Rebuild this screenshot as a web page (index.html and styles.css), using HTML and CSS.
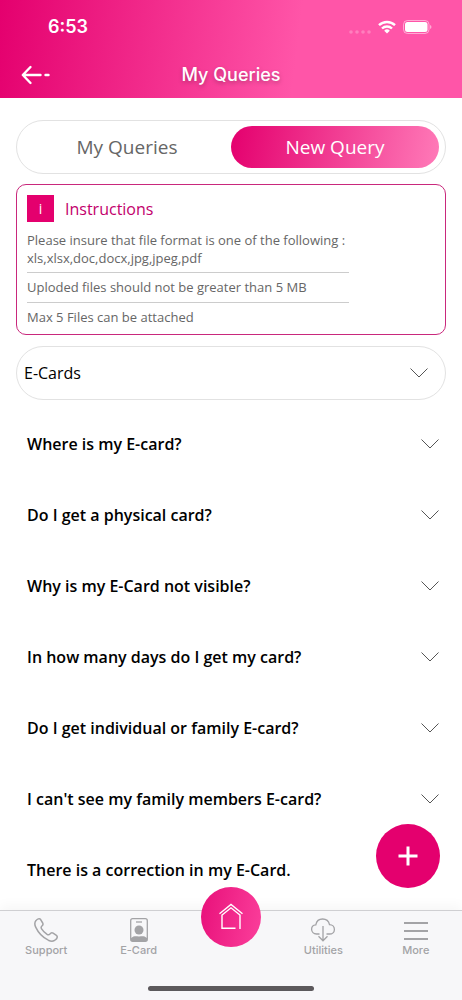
FILE: index.html
```html
<!DOCTYPE html>
<html lang="en">
<head>
<meta charset="utf-8">
<meta name="viewport" content="width=device-width, initial-scale=1">
<title>My Queries</title>
<link rel="stylesheet" href="styles.css">
</head>
<body>
<div class="app">
  <header class="header">
    <div class="status">
      <span class="time">6:53</span>
      <div class="status-icons">
        <svg width="22" height="4" viewBox="0 0 22 4" fill="#fff" fill-opacity=".25"><circle cx="2" cy="2" r="1.800"/><circle cx="8" cy="2" r="1.800"/><circle cx="14" cy="2" r="1.800"/><circle cx="20" cy="2" r="1.800"/></svg>
        <svg width="18" height="14" viewBox="0 0 18 14" fill="none" stroke="#fff" stroke-width="2.4"><path d="M1 5.2a11.5 11.5 0 0 1 16 0"/><path d="M4 8.5a7.2 7.2 0 0 1 10 0"/><path d="M9 13.4 6.2 10.7a4 4 0 0 1 5.6 0z" fill="#fff" stroke="none"/></svg>
        <svg width="29" height="14" viewBox="0 0 29 14"><rect x=".5" y=".5" width="25.500" height="13" rx="4" fill="none" stroke="#fff" stroke-opacity=".5"/><rect x="2" y="2" width="22.500" height="10" rx="2.5" fill="#fff"/><path d="M27 5v4q1.500-.5 1.500-2T27 5z" fill="#fff" fill-opacity=".5"/></svg>
      </div>
    </div>
    <div class="navbar">
      <button class="back" type="button" aria-label="Back">
        <svg width="30" height="20" viewBox="0 0 30 20" fill="none" stroke="#fff" stroke-width="2.400" stroke-linecap="round" stroke-linejoin="round"><path d="M10.500 2 2.800 10l7.700 8M3 10h17.500M25.500 10h3"/></svg>
      </button>
      <h1 class="title">My Queries</h1>
    </div>
  </header>

  <main class="content">
    <div class="tabs">
      <button class="tab" type="button">My Queries</button>
      <button class="tab tab-active" type="button">New Query</button>
    </div>

    <section class="instructions">
      <div class="instructions-head">
        <span class="info">i</span>
        <h2 class="instructions-title">Instructions</h2>
      </div>
      <ul class="rules">
        <li>Please insure that file format is one of the following : xls,xlsx,doc,docx,jpg,jpeg,pdf</li>
        <li>Uploded files should not be greater than 5 MB</li>
        <li>Max 5 Files can be attached</li>
      </ul>
    </section>

    <div class="category">
      <select class="category-select" aria-label="Category"><option>E-Cards</option></select>
      <svg class="chevron category-chevron" viewBox="0 0 18 10"><path d="M.5.5 9 9 17.500.5"/></svg>
    </div>

    <div class="faq">
      <button class="question" type="button">Where is my E-card?<svg class="chevron" viewBox="0 0 18 10"><path d="M.5.5 9 9 17.500.5"/></svg></button>
      <button class="question" type="button">Do I get a physical card?<svg class="chevron" viewBox="0 0 18 10"><path d="M.5.5 9 9 17.500.5"/></svg></button>
      <button class="question" type="button">Why is my E-Card not visible?<svg class="chevron" viewBox="0 0 18 10"><path d="M.5.5 9 9 17.500.5"/></svg></button>
      <button class="question" type="button">In how many days do I get my card?<svg class="chevron" viewBox="0 0 18 10"><path d="M.5.5 9 9 17.500.5"/></svg></button>
      <button class="question" type="button">Do I get individual or family E-card?<svg class="chevron" viewBox="0 0 18 10"><path d="M.5.5 9 9 17.500.5"/></svg></button>
      <button class="question" type="button">I can't see my family members E-card?<svg class="chevron" viewBox="0 0 18 10"><path d="M.5.5 9 9 17.500.5"/></svg></button>
      <button class="question" type="button">There is a correction in my E-Card.</button>
    </div>
  </main>

  <footer class="bottom">
    <button class="add" type="button" aria-label="Add query">
      <svg width="20" height="20" viewBox="0 0 20 20" fill="none" stroke="#fff" stroke-width="3"><path d="M10 .5v19M.5 10h19"/></svg>
    </button>
    <nav class="tabbar">
      <a class="item" href="#support">
        <svg width="26" height="26" viewBox="0 0 26 26" fill="none" stroke="currentColor" stroke-width="1.500" stroke-linejoin="round"><path d="M3 3.600C4.300 2 6.300 1 7.500 2.300L9.700 6c.7 1.300.2 2.200-.8 3-1.100.9-1 1.700-.3 2.800 1.300 2.100 3.300 4.100 5.500 5.600 1.100.7 1.900.7 2.800-.4.900-1.200 2-1.600 3.200-.9l3.300 2.200c1.600 1.100.7 3.100-.9 4.500-1.900 1.700-4.400 1.700-7.200.4C9.400 20.300 5.300 15.700 2.800 10.400 1.500 7.700 1.500 5.300 3 3.600z"/></svg>
        <span>Support</span>
      </a>
      <a class="item" href="#ecard">
        <svg width="26" height="26" viewBox="0 0 26 26" fill="none" stroke="currentColor" stroke-width="1.300"><rect x="4.700" y="1.700" width="16.600" height="22.600" rx="2"/><path d="M10 5h6"/><circle cx="13" cy="13" r="4.500" fill="currentColor" stroke="none"/><path d="M5 21c3-2.500 5-1.800 8-1.500 3-.3 5-1 8 1.500v3H5z" fill="currentColor" stroke="none"/></svg>
        <span>E-Card</span>
      </a>
      <a class="home" href="#home" aria-label="Home">
        <svg width="26" height="28" viewBox="0 0 26 28" fill="none" stroke="#fff" stroke-width="1.400"><path d="M1.500 10.800 13 1.500l11.500 9.300M3.500 12.500 13 4.800l9.500 7.700M22 12v14M4 12v13.300h13.500"/></svg>
      </a>
      <a class="item" href="#utilities">
        <svg width="26" height="26" viewBox="0 0 26 26" fill="none" stroke="currentColor" stroke-width="1.300"><path d="M9.500 17H6.500C3.600 17 1.600 14.800 1.600 12.300c0-2.400 1.800-4.300 4.200-4.500C6.500 4.200 9.300 2 12.600 2c3.400 0 6.200 2.300 6.900 5.600 2.800.1 4.900 2.200 4.900 4.800 0 2.600-2.100 4.600-4.900 4.600h-3M13 9v14.500M8.500 19.300l4.500 4.500 4.500-4.500"/></svg>
        <span>Utilities</span>
      </a>
      <a class="item" href="#more">
        <svg width="26" height="26" viewBox="0 0 26 26" fill="none" stroke="currentColor" stroke-width="2"><path d="M1 6h24M1 14h24M1 22h24"/></svg>
        <span>More</span>
      </a>
    </nav>
    <div class="indicator"></div>
  </footer>
</div>
</body>
</html>
```
FILE: styles.css
```css
* { box-sizing: border-box; }

body {
  margin: 0;
  background: #fff;
  color: #111;
  font-family: "Open Sans", sans-serif;
}

button {
  border: 0;
  background: none;
  padding: 0;
  color: inherit;
  font: inherit;
  cursor: pointer;
}

h1, h2, ul { margin: 0; padding: 0; }

.app {
  display: flex;
  flex-direction: column;
  height: 100vh;
}

.header {
  flex: none;
  background: linear-gradient(97deg, #e4006e, #ff55a8 64%);
  color: #fff;
  font-family: Inter, sans-serif;
}

.status {
  display: flex;
  align-items: center;
  justify-content: space-between;
  padding: 15px 30px 0 48px;
}

.time {
  font-size: 18px;
  font-weight: 600;
  line-height: 24px;
}

.status-icons {
  display: flex;
  align-items: flex-end;
  gap: 7px;
}

.navbar {
  display: grid;
  grid-template-columns: 60px 1fr 60px;
  align-items: center;
  padding: 24px 0 11px;
}

.back {
  display: flex;
  padding-left: 20px;
}

.title {
  font-size: 18px;
  font-weight: 500;
  line-height: 24px;
  text-align: center;
  text-shadow: 0 2px 4px rgba(0, 0, 0, .25);
}

.content {
  flex: 1;
  min-height: 0;
  overflow-y: auto;
  scrollbar-width: none;
  padding: 22px 16px 0;
}

.tabs {
  display: grid;
  grid-template-columns: 1fr 1fr;
  padding: 5px 6px;
  border: 1px solid #e2e2e2;
  border-radius: 27px;
}

.tab {
  height: 42px;
  border-radius: 21px;
  color: #666;
  font-size: 19px;
}

.tab-active {
  background: linear-gradient(100deg, #e4006e, #ff7ab8);
  color: #fff;
}

.instructions {
  margin-top: 10px;
  padding: 10px 10px 2px;
  border: 1px solid #c9287c;
  border-radius: 10px;
}

.instructions-head {
  display: flex;
  align-items: center;
  gap: 11px;
  margin-bottom: 9px;
}

.info {
  width: 27px;
  background: #e4006e;
  color: #fff;
  font-size: 14px;
  line-height: 27px;
  text-align: center;
}

.instructions-title {
  color: #c2006c;
  font-size: 16px;
  font-weight: 500;
  line-height: 24px;
}

.rules {
  width: 79%;
  list-style: none;
  color: #666;
  font-size: 13px;
  line-height: 18px;
}

.rules li { padding: 5px 0 6px; }
.rules li:first-child { padding: 0 0 5px; }
.rules li + li { border-top: 1px solid #ccc; }

.category {
  position: relative;
  margin-top: 11px;
}

.category-select {
  appearance: none;
  width: 100%;
  height: 54px;
  padding: 0 50px 0 7px;
  border: 1px solid #e2e2e2;
  border-radius: 27px;
  background: #fff;
  color: #000;
  font: 500 16px "Open Sans", sans-serif;
}

.category-chevron {
  position: absolute;
  top: 22px;
  right: 18px;
  pointer-events: none;
}

.chevron {
  flex: none;
  width: 18px;
  height: 10px;
  fill: none;
  stroke: #555;
}

.faq {
  display: flex;
  flex-direction: column;
  padding: 8px 7px 0 11px;
}

.question {
  display: flex;
  align-items: center;
  justify-content: space-between;
  height: 71px;
  color: #000;
  font-size: 16px;
  font-weight: 600;
  text-align: left;
}

.bottom {
  position: relative;
  flex: none;
  border-top: 1px solid #cfcfd2;
  background: #f7f7f9;
  box-shadow: 0 -4px 12px rgba(0, 0, 0, .04);
}

.add {
  position: absolute;
  right: 22px;
  bottom: 112px;
  display: grid;
  place-items: center;
  width: 64px;
  height: 64px;
  border-radius: 50%;
  background: #e4006e;
}

.tabbar {
  display: grid;
  grid-template-columns: repeat(5, 1fr);
  height: 75px;
  padding-top: 6px;
}

.item {
  display: flex;
  flex-direction: column;
  align-items: center;
  color: #a3a3a6;
  font-family: Inter, sans-serif;
  font-size: 11px;
  font-weight: 500;
  line-height: 14px;
  text-decoration: none;
}

.home {
  justify-self: center;
  display: grid;
  place-items: center;
  width: 60px;
  height: 60px;
  margin-top: -30px;
  border-radius: 50%;
  background: linear-gradient(100deg, #e8107a, #fb3f9b);
}

.indicator {
  width: 36%;
  height: 5px;
  margin: 0 auto 9px;
  border-radius: 3px;
  background: #5c595c;
}
```
